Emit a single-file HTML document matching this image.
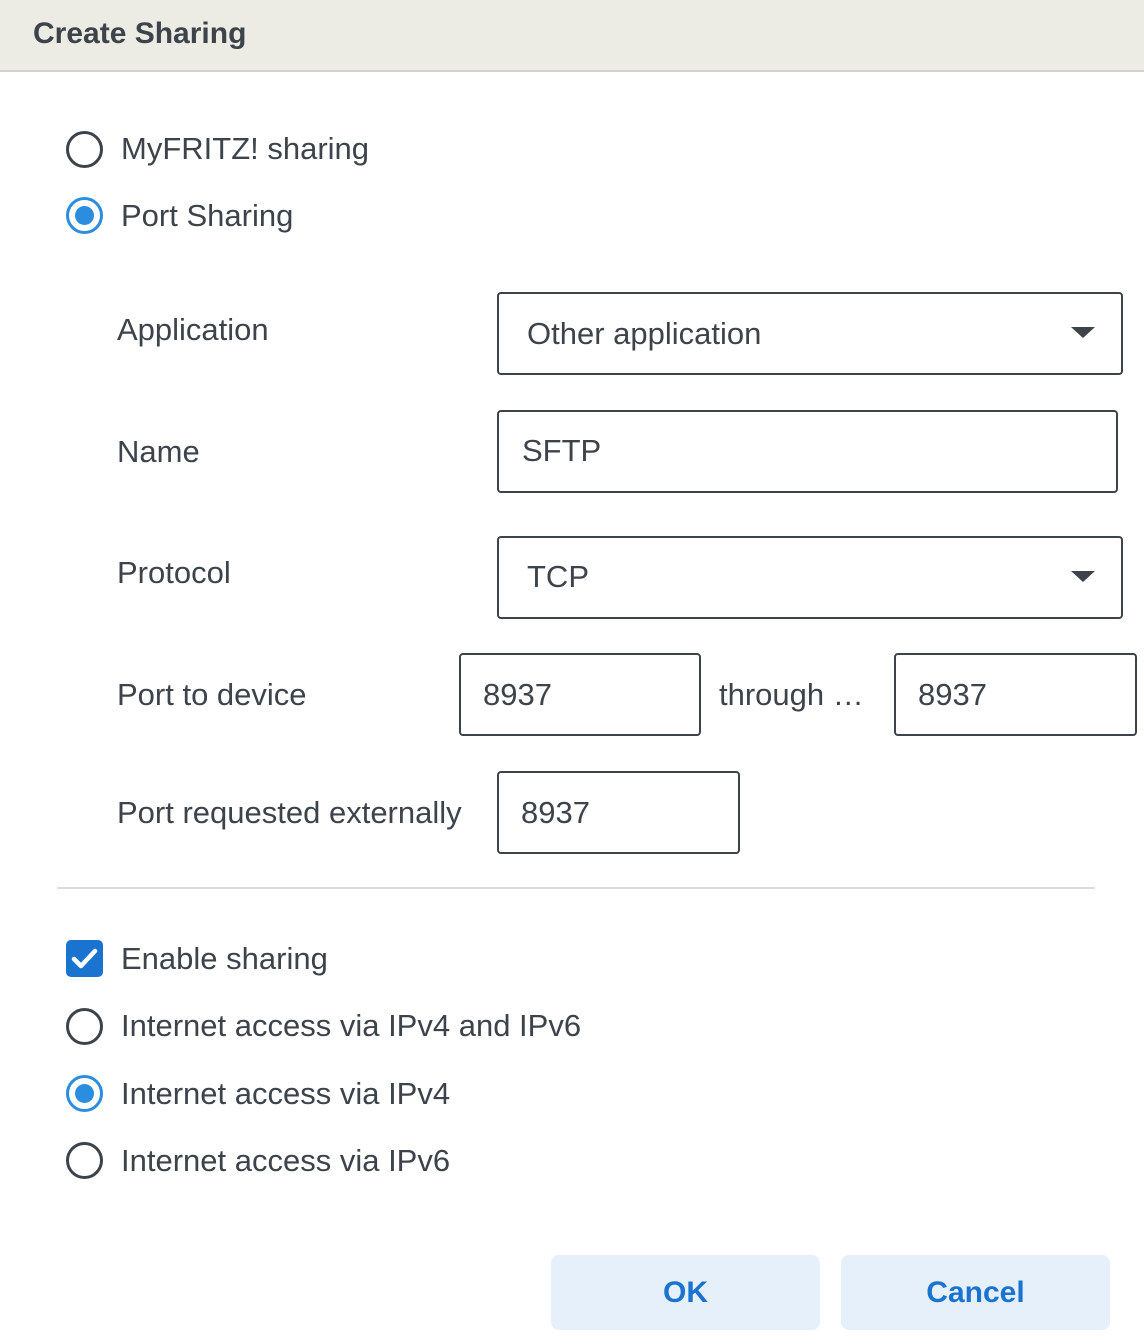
<!DOCTYPE html>
<html><head><style>
*{margin:0;padding:0;box-sizing:border-box}
body{width:1144px;height:1344px;background:#fff;position:relative;overflow:hidden;font-family:"Liberation Sans",sans-serif;color:#3c434a}
.a{position:absolute}
.hdr{left:0;top:0;width:1144px;height:72px;background:#ecebe4;border-bottom:2px solid #d3d3d0}
.t{font-size:31px;line-height:34px;white-space:nowrap}
.radio{width:37px;height:37px;border-radius:50%;border:3px solid #3c434a;background:#fff}
.radio.on{border-color:#2b8de0}
.radio.on::after{content:"";position:absolute;left:6px;top:6px;width:19px;height:19px;border-radius:50%;background:#2b8de0}
.box{border:2px solid #3c434a;border-radius:4px;background:#fff}
.caret{width:0;height:0;border-left:12px solid transparent;border-right:12px solid transparent;border-top:11px solid #3c434a}
.btn{background:#e5f0fa;border-radius:8px;color:#1a74cf;font-weight:bold;font-size:30px;display:flex;align-items:center;justify-content:center}
</style></head><body>
<div class="a hdr"></div>
<div class="a t" style="left:33px;top:17px;font-weight:bold;font-size:30px">Create Sharing</div>

<div class="a radio" style="left:66px;top:131px"></div>
<div class="a t" style="left:121px;top:132px">MyFRITZ! sharing</div>
<div class="a radio on" style="left:66px;top:197px"></div>
<div class="a t" style="left:121px;top:199px">Port Sharing</div>

<div class="a t" style="left:117px;top:313px">Application</div>
<div class="a box" style="left:497px;top:292px;width:626px;height:83px"></div>
<div class="a t" style="left:527px;top:317px">Other application</div>
<div class="a caret" style="left:1071px;top:327px"></div>

<div class="a t" style="left:117px;top:435px">Name</div>
<div class="a box" style="left:497px;top:410px;width:621px;height:83px"></div>
<div class="a t" style="left:522px;top:434px">SFTP</div>

<div class="a t" style="left:117px;top:556px">Protocol</div>
<div class="a box" style="left:497px;top:536px;width:626px;height:83px"></div>
<div class="a t" style="left:527px;top:560px">TCP</div>
<div class="a caret" style="left:1071px;top:571px"></div>

<div class="a t" style="left:117px;top:678px">Port to device</div>
<div class="a box" style="left:459px;top:653px;width:242px;height:83px"></div>
<div class="a t" style="left:483px;top:678px">8937</div>
<div class="a t" style="left:719px;top:678px">through …</div>
<div class="a box" style="left:894px;top:653px;width:243px;height:83px"></div>
<div class="a t" style="left:918px;top:678px">8937</div>

<div class="a t" style="left:117px;top:796px">Port requested externally</div>
<div class="a box" style="left:497px;top:771px;width:243px;height:83px"></div>
<div class="a t" style="left:521px;top:796px">8937</div>

<div class="a" style="left:57px;top:887px;width:1038px;height:2px;background:#dcdcdc"></div>

<div class="a" style="left:66px;top:940px;width:37px;height:37px;border-radius:5px;background:#1a74cf">
<svg width="37" height="37" viewBox="0 0 37 37"><path d="M8 19 L15 26 L29 11" stroke="#fff" stroke-width="4.5" fill="none" stroke-linecap="round" stroke-linejoin="round"/></svg></div>
<div class="a t" style="left:121px;top:942px">Enable sharing</div>
<div class="a radio" style="left:66px;top:1008px"></div>
<div class="a t" style="left:121px;top:1009px">Internet access via IPv4 and IPv6</div>
<div class="a radio on" style="left:66px;top:1075px"></div>
<div class="a t" style="left:121px;top:1077px">Internet access via IPv4</div>
<div class="a radio" style="left:66px;top:1142px"></div>
<div class="a t" style="left:121px;top:1144px">Internet access via IPv6</div>

<div class="a btn" style="left:551px;top:1255px;width:269px;height:75px">OK</div>
<div class="a btn" style="left:841px;top:1255px;width:269px;height:75px">Cancel</div>
</body></html>
